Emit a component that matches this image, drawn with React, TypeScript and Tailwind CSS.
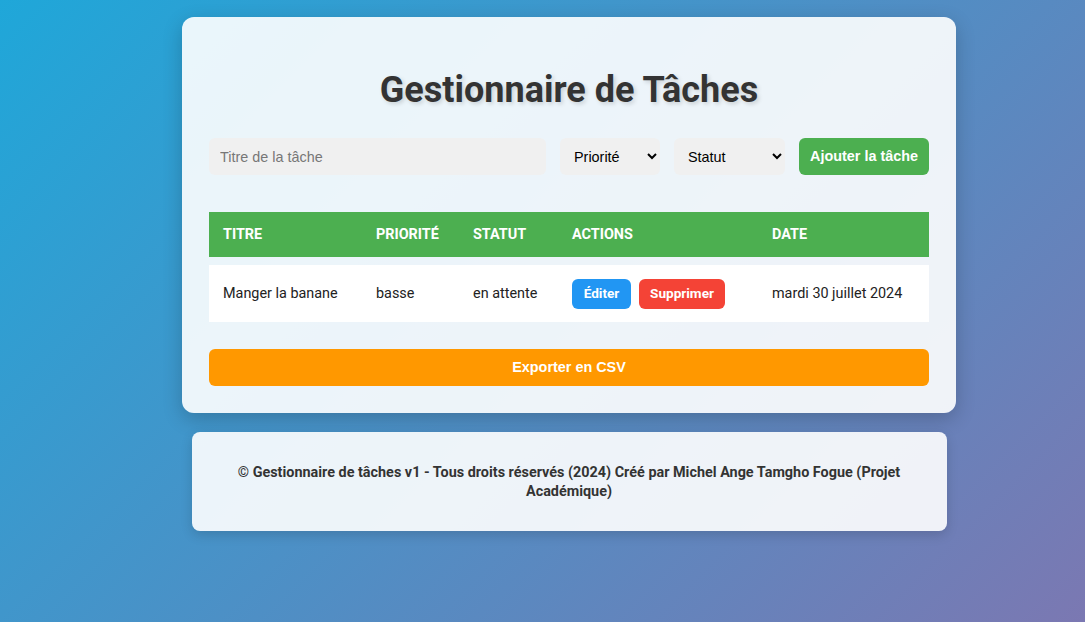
import React from 'react';

const tasks = [
  { titre: 'Manger la banane', priorite: 'basse', statut: 'en attente', date: 'mardi 30 juillet 2024' },
];

export default function App() {
  return (
    <div className="min-h-[622px] w-full bg-[linear-gradient(135deg,#1fa7d9_0%,#7b78b2_100%)] font-['Roboto',sans-serif] text-[#333]">
      <div className="flex flex-col items-center pl-[53px] pt-[17px]">
        {/* carte principale */}
        <div className="w-[774px] rounded-xl bg-white/90 px-[27px] pt-[50px] pb-[27px] shadow-[0_6px_20px_rgba(0,0,0,0.2)]">
          <h1 className="text-center text-[36px] font-bold leading-[46px] text-[#333] [text-shadow:2px_2px_4px_rgba(0,0,0,0.15)]">
            Gestionnaire de Tâches
          </h1>

          <div className="mt-[25px] flex items-center gap-[14px] font-['Liberation_Sans',Arial,sans-serif]">
            <input
              className="h-[37px] w-[337px] rounded-md bg-[#f0f0f0] px-[11px] text-[14.4px] text-[#333] placeholder:text-[#777] outline-none"
              placeholder="Titre de la tâche"
            />
            <select className="h-[37px] w-[100px] rounded-md bg-[#f0f0f0] pl-[10px] pr-[2px] text-[14.4px] text-black outline-none">
              <option>Priorité</option>
            </select>
            <select className="h-[37px] w-[111px] rounded-md bg-[#f0f0f0] pl-[10px] pr-[2px] text-[14.4px] text-black outline-none">
              <option>Statut</option>
            </select>
            <button className="h-[37px] w-[130px] rounded-md bg-[#4caf50] text-[14.4px] font-bold text-white">
              Ajouter la tâche
            </button>
          </div>

          <table className="mt-[37px] w-full border-separate border-spacing-y-0 text-left text-[14.4px]">
            <thead>
              <tr className="h-[45px] bg-[#4caf50] text-white">
                <th className="w-[153px] pl-[14px] font-bold uppercase">Titre</th>
                <th className="w-[97px] pl-[14px] font-bold uppercase">Priorité</th>
                <th className="w-[99px] pl-[14px] font-bold uppercase">Statut</th>
                <th className="w-[200px] pl-[14px] font-bold uppercase">Actions</th>
                <th className="pl-[14px] font-bold uppercase">Date</th>
              </tr>
              <tr className="h-[8px]"><td colSpan={5}></td></tr>
            </thead>
            <tbody>
              {tasks.map((t) => (
                <tr key={t.titre} className="h-[57px] bg-white text-[#222]">
                  <td className="pl-[14px]">{t.titre}</td>
                  <td className="pl-[14px]">{t.priorite}</td>
                  <td className="pl-[14px]">{t.statut}</td>
                  <td className="pl-[14px]">
                    <div className="flex gap-2">
                      <button className="h-[30px] w-[59px] rounded-md bg-[#2196f3] text-[13.6px] font-bold text-white">
                        Éditer
                      </button>
                      <button className="h-[30px] w-[86px] rounded-md bg-[#f44336] text-[13.6px] font-bold text-white">
                        Supprimer
                      </button>
                    </div>
                  </td>
                  <td className="pl-[14px]">{t.date}</td>
                </tr>
              ))}
            </tbody>
          </table>

          <button className="mt-[27px] h-[37px] w-full rounded-md bg-[#ff9800] font-['Liberation_Sans',Arial,sans-serif] text-[14.4px] font-bold text-white">
            Exporter en CSV
          </button>
        </div>

        {/* pied de page */}
        <footer className="mt-[19px] flex h-[99px] w-[755px] items-center justify-center rounded-lg bg-white/90 px-[40px] text-center text-[14.4px] font-bold leading-[19px] text-[#333] shadow-[0_4px_12px_rgba(0,0,0,0.15)]">
          <p>
            © Gestionnaire de tâches v1 - Tous droits réservés (2024) Créé par Michel Ange Tamgho Fogue (Projet Académique)
          </p>
        </footer>
      </div>
    </div>
  );
}
